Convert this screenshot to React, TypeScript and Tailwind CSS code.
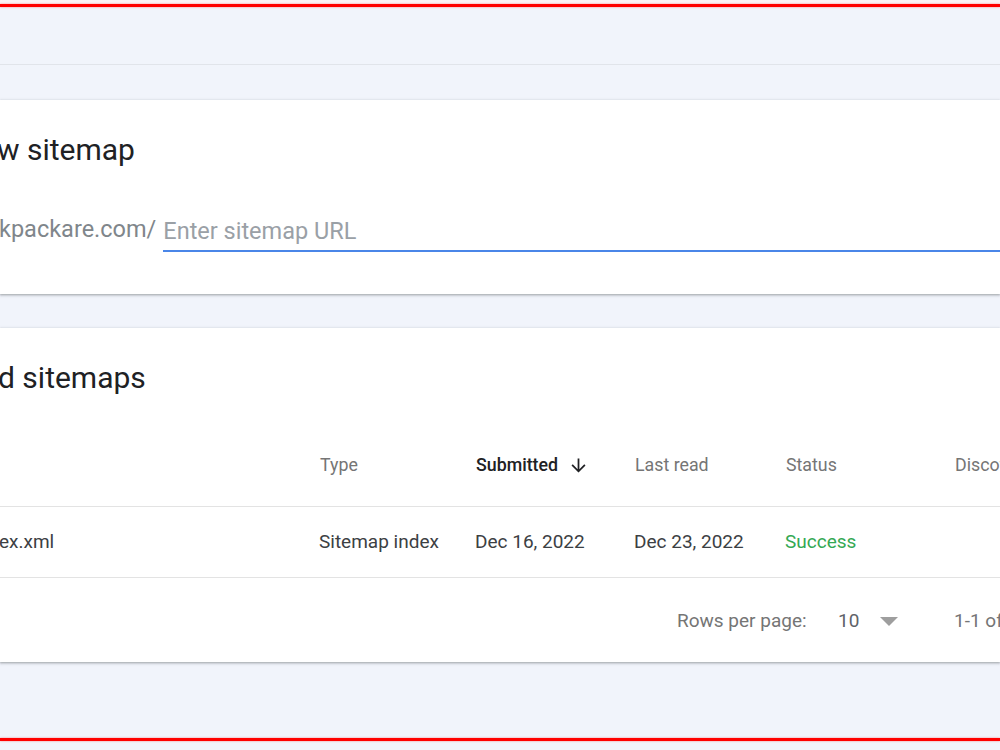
import React from "react";

export default function App() {
  return (
    <div
      className="w-[1000px] h-[750px] overflow-hidden bg-[#f1f4fb] flex flex-col"
      style={{ fontFamily: "Roboto, 'Noto Sans', sans-serif" }}
    >
      <div className="h-[4px] bg-[#fbf3f6] shrink-0" />
      <div className="h-[3px] bg-[#ff0000] shrink-0 shadow-[0_0_2px_rgba(255,0,0,0.5)]" />
      <div className="h-[58px] shrink-0 border-b border-[#e1e4ea]" />
      <div className="h-[35px] shrink-0" />

      {/* Card 1 */}
      <div className="h-[194px] shrink-0 bg-white shadow-[0_1px_2px_rgba(60,64,67,0.35),0_1px_3px_1px_rgba(60,64,67,0.12)] flex flex-col">
        <div className="h-[99px] flex items-center -ml-[3px] text-[30px] text-[#202124] whitespace-nowrap">
          w sitemap
        </div>
        <div className="h-[53px] flex items-end">
          <span className="mb-[5px] -ml-[1px] text-[23.5px] text-[#80868b] whitespace-nowrap">
            kpackare.com/
          </span>
          <div className="ml-[7px] flex-1 h-[42px] border-b-2 border-[#4a86e8] flex items-center pt-[3px] text-[23.5px] text-[#9aa0a6] whitespace-nowrap">
            Enter sitemap URL
          </div>
        </div>
      </div>

      <div className="h-[34px] shrink-0" />

      {/* Card 2 */}
      <div className="h-[334px] shrink-0 bg-white shadow-[0_1px_2px_rgba(60,64,67,0.35),0_1px_3px_1px_rgba(60,64,67,0.12)] flex flex-col">
        <div className="h-[99px] flex items-center -ml-[2px] text-[30px] text-[#202124] whitespace-nowrap">
          d sitemaps
        </div>
        <div className="h-[80px] flex items-center pb-[2px] border-b border-[#e3e3e3] text-[17.8px] text-[#757575] whitespace-nowrap">
          <div className="w-[320px] shrink-0" />
          <div className="w-[156px] shrink-0">Type</div>
          <div className="w-[159px] shrink-0 flex items-center font-medium text-[#202124]">
            Submitted
            <svg
              className="ml-[10px]"
              width="21"
              height="21"
              viewBox="0 0 24 24"
              fill="#202124"
            >
              <path d="M20 12l-1.41-1.41L13 16.17V4h-2v12.17l-5.58-5.59L4 12l8 8 8-8z" />
            </svg>
          </div>
          <div className="w-[151px] shrink-0">Last read</div>
          <div className="w-[169px] shrink-0">Status</div>
          <div className="shrink-0">Discovered pages</div>
        </div>
        <div className="h-[71px] flex items-center border-b border-[#e3e3e3] text-[19px] text-[#3c4043] whitespace-nowrap">
          <div className="w-[320px] shrink-0 -ml-[1px]">ex.xml</div>
          <div className="w-[156px] shrink-0">Sitemap index</div>
          <div className="w-[159px] shrink-0">Dec 16, 2022</div>
          <div className="w-[151px] shrink-0">Dec 23, 2022</div>
          <div className="w-[169px] shrink-0 text-[#34a853]">Success</div>
        </div>
        <div className="h-[83px] flex items-center pt-[3px] text-[19px] text-[#757575] whitespace-nowrap">
          <div className="w-[677px] shrink-0" />
          <div className="w-[161px] shrink-0">Rows per page:</div>
          <div className="w-[42px] shrink-0 text-[#5f6368]">10</div>
          <svg width="18" height="9" viewBox="0 0 18 9" className="shrink-0">
            <path d="M0 0 L18 0 L9 9 Z" fill="#9e9e9e" />
          </svg>
          <div className="w-[56px] shrink-0" />
          <div className="shrink-0">1-1 of 1</div>
        </div>
      </div>

      <div className="h-[76px] shrink-0" />
      <div className="h-[3px] bg-[#ff0000] shrink-0 shadow-[0_0_2px_rgba(255,0,0,0.5)]" />
    </div>
  );
}
